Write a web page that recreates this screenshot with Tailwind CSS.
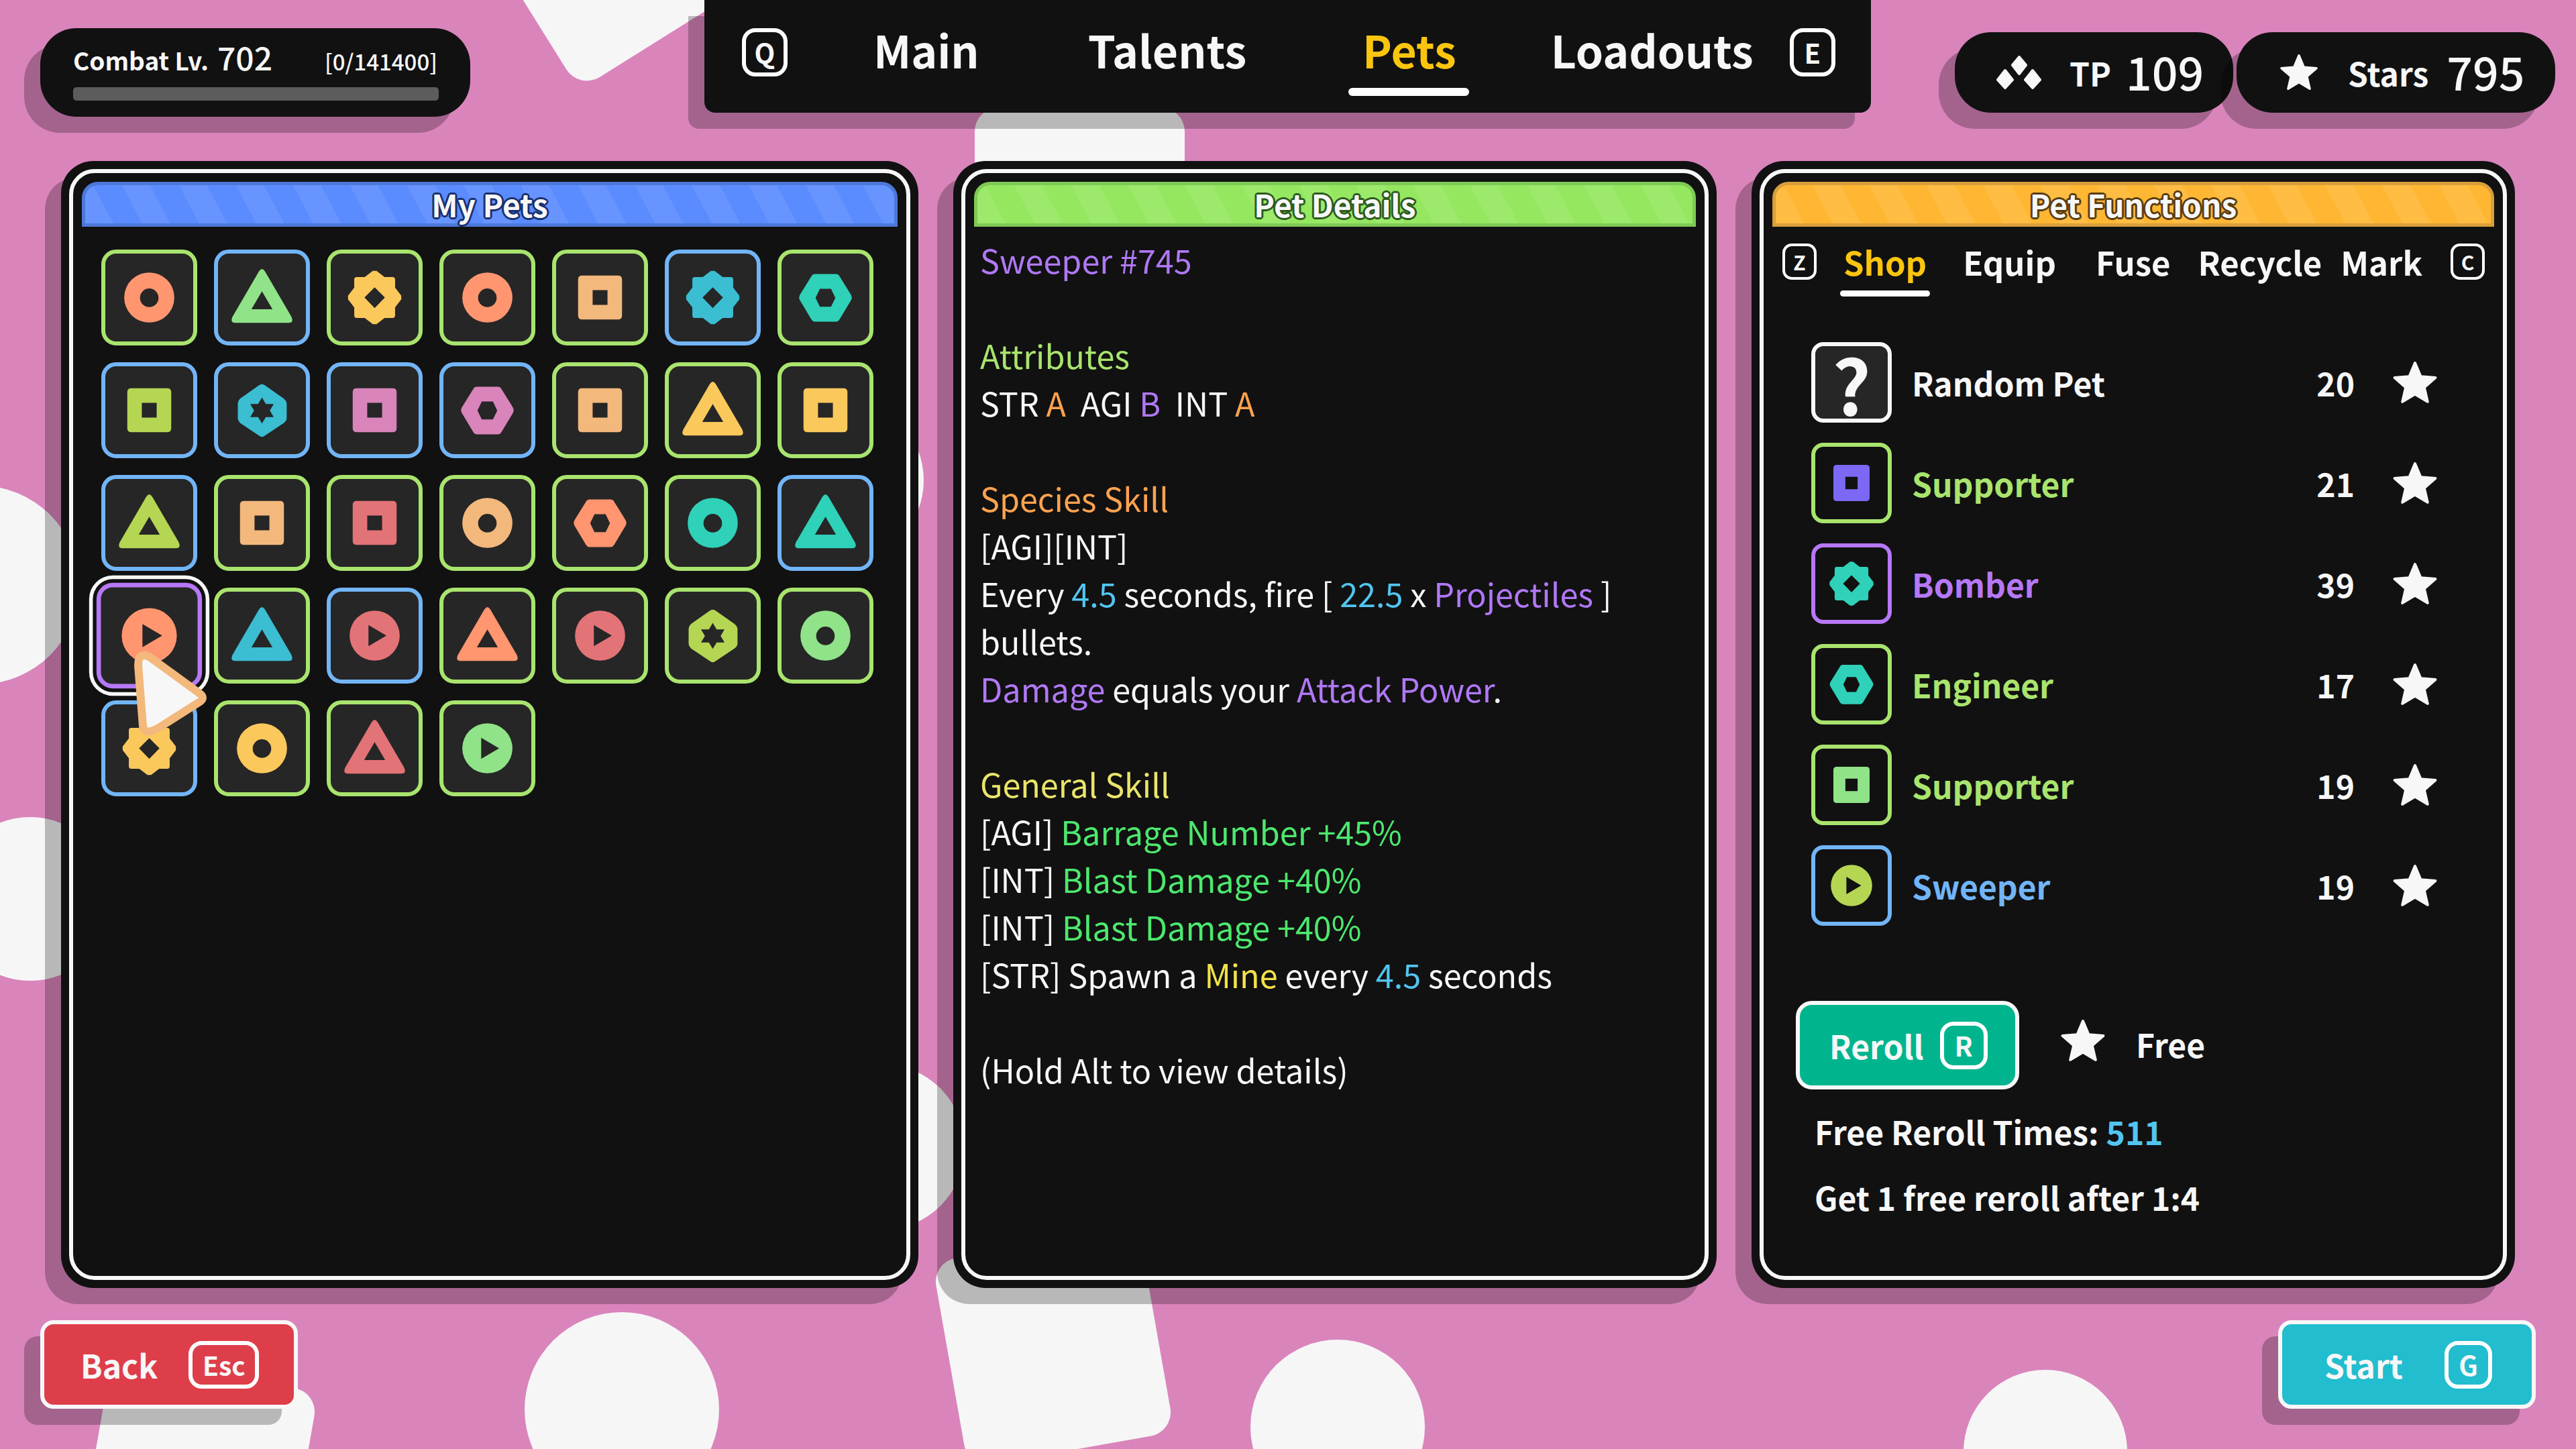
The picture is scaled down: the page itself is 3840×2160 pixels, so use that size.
<!doctype html>
<html lang="en">
<head>
<meta charset="utf-8">
<title>Pets</title>
<script src="https://cdn.jsdelivr.net/npm/@tailwindcss/browser@4"></script>
</head>
<body>
<svg class="absolute w-0 h-0" aria-hidden="true">
  <defs>
    <symbol id="ring" viewBox="0 0 142 142"><path fill="currentColor" fill-rule="evenodd" d="M71 30.500a40.500 40.500 0 1 0 0 81a40.500 40.500 0 1 0 0-81ZM71 56.500a15 15 0 1 1 0 30a15 15 0 1 1 0-30Z"/></symbol>
    <symbol id="play" viewBox="0 0 142 142"><path fill="currentColor" fill-rule="evenodd" d="M71 30.500a40.500 40.500 0 1 0 0 81a40.500 40.500 0 1 0 0-81ZM61 54L90 71L61 88Z"/></symbol>
    <symbol id="sq" viewBox="0 0 142 142"><path fill="currentColor" fill-rule="evenodd" d="M42 35.500H100Q106.500 35.500 106.500 42V100Q106.500 106.500 100 106.500H42Q35.500 106.500 35.500 100V42Q35.500 35.500 42 35.500ZM59 59V83H83V59Z"/></symbol>
    <symbol id="tri" viewBox="0 0 142 142"><path fill="currentColor" fill-rule="evenodd" d="M66 29Q71 21 76 29L118.500 102Q123 112 114 112H28Q19 112 23.500 102ZM71 61L54 90H88Z"/></symbol>
    <symbol id="hex" viewBox="0 0 142 142"><path fill="currentColor" fill-rule="evenodd" d="M54 33H88Q92 33 94 37L112 66Q115 71 112 76L94 106Q92 110 88 110H54Q50 110 48 106L30 76Q27 71 30 66L48 37Q50 33 54 33ZM62 57L55 71.500L62 86H80L87 71.500L80 57Z"/></symbol>
    <symbol id="star6" viewBox="0 0 142 142"><path fill="currentColor" fill-rule="evenodd" d="M66 31Q71 27 76 31L106 52Q111 56 111 61V84Q111 88 106 92L76 112Q71 116 66 112L36 92Q32 88 32 84V61Q32 56 36 52ZM71 50.500L64.700 61H52L58.300 71.500L52 82H64.700L71 92.500L77.300 82H90L83.700 71.500L90 61H77.300Z"/></symbol>
    <symbol id="gear" viewBox="0 0 142 142"><path fill="currentColor" fill-rule="evenodd" d="M68 28H74L87 38H100Q104 38 104 42V55L114 68V74L104 87V100Q104 104 100 104H87L74 114H68L55 104H42Q38 104 38 100V87L28 74V68L38 55V42Q38 38 42 38H55ZM71 54.500L54.500 71L71 88L87.500 71Z"/></symbol>
    <symbol id="bigstar" viewBox="0 0 70 67"><polygon fill="currentColor" stroke="currentColor" stroke-width="4" stroke-linejoin="round" points="35,4 43.500,24.300 65.400,26.100 48.800,40.500 53.800,61.900 35,50.500 16.200,61.900 21.200,40.500 4.600,26.100 26.500,24.300"/></symbol>
  </defs>
</svg>

<div class="relative w-[3840px] h-[2160px] overflow-hidden bg-[#da84bc] font-['Noto_Sans_CJK_SC','Noto_Sans',sans-serif] text-[#f7f7f7]">

  <div class="absolute left-[757px] top-[-237px] w-[312px] h-[312px] rounded-[36px] bg-[#f6f6f6] -rotate-[32deg]"></div>
  <div class="absolute left-[1453px] top-[160px] w-[313px] h-[312px] rounded-[36px] bg-[#f6f6f6]"></div>
  <div class="absolute left-[1414px] top-[1852px] w-[312px] h-[312px] rounded-[36px] bg-[#f6f6f6] -rotate-[10deg]"></div>
  <div class="absolute left-[138px] top-[2046px] w-[312px] h-[312px] rounded-[36px] bg-[#f6f6f6] rotate-[10deg]"></div>
  <div class="absolute left-[-178px] top-[724px] w-[296px] h-[296px] rounded-full bg-[#f6f6f6]"></div>
  <div class="absolute left-[-77px] top-[1218px] w-[244px] h-[244px] rounded-full bg-[#f6f6f6]"></div>
  <div class="absolute left-[1133px] top-[594px] w-[244px] h-[244px] rounded-full bg-[#f6f6f6]"></div>
  <div class="absolute left-[1190px] top-[1586px] w-[248px] h-[248px] rounded-full bg-[#f6f6f6]"></div>
  <div class="absolute left-[782px] top-[1956px] w-[290px] h-[290px] rounded-full bg-[#f6f6f6]"></div>
  <div class="absolute left-[1864px] top-[1997px] w-[260px] h-[260px] rounded-full bg-[#f6f6f6]"></div>
  <div class="absolute left-[2927px] top-[2042px] w-[244px] h-[244px] rounded-full bg-[#f6f6f6]"></div>

  <!-- top bar -->
  <header class="relative flex items-start h-[240px]">
    <div class="mt-[42px] ml-[60px] w-[641px] h-[132px] rounded-[54px] bg-[#111] shadow-[-24px_24px_0_rgba(0,0,0,0.25)] px-[49px] pt-[6px]">
      <div class="flex items-baseline font-semibold h-[66px]">
        <span class="text-[37px]">Combat Lv.</span>
        <span class="ml-[13px] text-[48px] font-medium">702</span>
        <span class="ml-auto text-[33px] font-medium">[0/141400]</span>
      </div>
      <div class="mt-[16px] h-[20px] w-[545px] rounded-[5px] bg-[#5c5c5c]"></div>
    </div>

    <nav class="relative ml-[349px] w-[1739px] h-[168px] rounded-b-[16px] bg-[#111] shadow-[-24px_24px_0_rgba(0,0,0,0.25)] font-bold">
      <div class="flex items-center h-[156px] pl-[56px]">
        <span class="w-[68px] h-[72px] rounded-[20px] border-[6px] border-white flex items-center justify-center text-[40px] font-bold">Q</span>
        <span class="ml-[128px] mb-[10px] text-[66px]">Main</span>
        <span class="ml-[162px] mb-[10px] text-[66px]">Talents</span>
        <span class="ml-[173px] mb-[10px] text-[66px] text-[#fac50f]">Pets</span>
        <span class="ml-[141px] mb-[10px] text-[66px]">Loadouts</span>
        <span class="ml-[54px] w-[68px] h-[72px] rounded-[20px] border-[6px] border-white flex items-center justify-center text-[40px] font-bold">E</span>
      </div>
      <div class="absolute left-[960px] top-[131px] w-[180px] h-[12px] rounded-full bg-white"></div>
    </nav>

    <div class="ml-[125px] mt-[48px] w-[415px] h-[120px] rounded-[54px] bg-[#111] shadow-[-24px_24px_0_rgba(0,0,0,0.25)] flex items-center pl-[61px] font-semibold">
      <svg class="w-[70px] h-[50px]" viewBox="0 0 70 50"><g fill="#f7f7f7" stroke="#f7f7f7" stroke-width="4" stroke-linejoin="round"><polygon points="35,2 45,14 35,27 25,14"/><polygon points="14,22 25,36 14,48 3,36"/><polygon points="55,22 66,36 55,48 44,36"/></g></svg>
      <span class="ml-[40px] text-[48px]">TP</span>
      <span class="ml-[22px] mb-[4px] text-[68px] font-medium">109</span>
    </div>
    <div class="ml-[5px] mt-[48px] w-[475px] h-[120px] rounded-[54px] bg-[#111] shadow-[-24px_24px_0_rgba(0,0,0,0.25)] flex items-center pl-[63px] font-semibold">
      <svg class="w-[60px] h-[58px]"><use href="#bigstar"/></svg>
      <span class="ml-[43px] text-[48px]">Stars</span>
      <span class="ml-[27px] mb-[4px] text-[68px] font-medium">795</span>
    </div>
  </header>

  <!-- panels -->
  <main class="relative flex gap-[52px] pl-[91px] h-[1680px]">

    <section class="w-[1278px] rounded-[48px] bg-[#111] p-[12px] shadow-[-24px_24px_0_rgba(0,0,0,0.25)]">
      <div class="h-full rounded-[38px] border-[6px] border-[#f7f7f7] px-[13px] pt-[13px]">
        <div class="h-[67px] rounded-t-[24px] border-[5px] border-[#4d78d8] bg-[#5a8bff] bg-[repeating-linear-gradient(62deg,rgba(255,255,255,0.08)_0,rgba(255,255,255,0.08)_37px,transparent_37px,transparent_75px)] flex items-center justify-center text-[46px] font-bold [text-shadow:3px_0_0_#18306e,-3px_0_0_#18306e,0_3px_0_#18306e,0_-3px_0_#18306e,2px_2px_0_#18306e,-2px_2px_0_#18306e,2px_-2px_0_#18306e,-2px_-2px_0_#18306e]">My Pets</div>
        <div class="grid grid-cols-[repeat(7,143px)] auto-rows-[143px] gap-[25px] ml-[29px] mt-[34px]">
          <div class="rounded-[22px] border-[6px] border-[#a9e46e] bg-[#262626]"><svg class="w-full h-full text-[#ff9670]"><use href="#ring"/></svg></div>
          <div class="rounded-[22px] border-[6px] border-[#72b5f7] bg-[#262626]"><svg class="w-full h-full text-[#90e388]"><use href="#tri"/></svg></div>
          <div class="rounded-[22px] border-[6px] border-[#a9e46e] bg-[#262626]"><svg class="w-full h-full text-[#fbc85c]"><use href="#gear"/></svg></div>
          <div class="rounded-[22px] border-[6px] border-[#a9e46e] bg-[#262626]"><svg class="w-full h-full text-[#ff9670]"><use href="#ring"/></svg></div>
          <div class="rounded-[22px] border-[6px] border-[#a9e46e] bg-[#262626]"><svg class="w-full h-full text-[#f3b87c]"><use href="#sq"/></svg></div>
          <div class="rounded-[22px] border-[6px] border-[#72b5f7] bg-[#262626]"><svg class="w-full h-full text-[#3bbdd2]"><use href="#gear"/></svg></div>
          <div class="rounded-[22px] border-[6px] border-[#a9e46e] bg-[#262626]"><svg class="w-full h-full text-[#2fd1b8]"><use href="#hex"/></svg></div>

          <div class="rounded-[22px] border-[6px] border-[#72b5f7] bg-[#262626]"><svg class="w-full h-full text-[#b5d653]"><use href="#sq"/></svg></div>
          <div class="rounded-[22px] border-[6px] border-[#72b5f7] bg-[#262626]"><svg class="w-full h-full text-[#3bbdd2]"><use href="#star6"/></svg></div>
          <div class="rounded-[22px] border-[6px] border-[#72b5f7] bg-[#262626]"><svg class="w-full h-full text-[#d984bb]"><use href="#sq"/></svg></div>
          <div class="rounded-[22px] border-[6px] border-[#72b5f7] bg-[#262626]"><svg class="w-full h-full text-[#d984bb]"><use href="#hex"/></svg></div>
          <div class="rounded-[22px] border-[6px] border-[#a9e46e] bg-[#262626]"><svg class="w-full h-full text-[#f3b87c]"><use href="#sq"/></svg></div>
          <div class="rounded-[22px] border-[6px] border-[#a9e46e] bg-[#262626]"><svg class="w-full h-full text-[#fbc85c]"><use href="#tri"/></svg></div>
          <div class="rounded-[22px] border-[6px] border-[#a9e46e] bg-[#262626]"><svg class="w-full h-full text-[#fbc85c]"><use href="#sq"/></svg></div>

          <div class="rounded-[22px] border-[6px] border-[#72b5f7] bg-[#262626]"><svg class="w-full h-full text-[#b5d653]"><use href="#tri"/></svg></div>
          <div class="rounded-[22px] border-[6px] border-[#a9e46e] bg-[#262626]"><svg class="w-full h-full text-[#f3b87c]"><use href="#sq"/></svg></div>
          <div class="rounded-[22px] border-[6px] border-[#a9e46e] bg-[#262626]"><svg class="w-full h-full text-[#e27377]"><use href="#sq"/></svg></div>
          <div class="rounded-[22px] border-[6px] border-[#a9e46e] bg-[#262626]"><svg class="w-full h-full text-[#f3b87c]"><use href="#ring"/></svg></div>
          <div class="rounded-[22px] border-[6px] border-[#a9e46e] bg-[#262626]"><svg class="w-full h-full text-[#ff9670]"><use href="#hex"/></svg></div>
          <div class="rounded-[22px] border-[6px] border-[#a9e46e] bg-[#262626]"><svg class="w-full h-full text-[#2fd1b8]"><use href="#ring"/></svg></div>
          <div class="rounded-[22px] border-[6px] border-[#72b5f7] bg-[#262626]"><svg class="w-full h-full text-[#2fd1b8]"><use href="#tri"/></svg></div>

          <div class="relative z-10 scale-[1.1] rounded-[22px] border-[6px] border-[#b678f6] bg-[#262626] shadow-[0_0_0_5px_#111,0_0_0_10px_#f7f7f7]"><svg class="w-full h-full text-[#ff9670]"><use href="#play"/></svg></div>
          <div class="rounded-[22px] border-[6px] border-[#a9e46e] bg-[#262626]"><svg class="w-full h-full text-[#3bbdd2]"><use href="#tri"/></svg></div>
          <div class="rounded-[22px] border-[6px] border-[#72b5f7] bg-[#262626]"><svg class="w-full h-full text-[#e27377]"><use href="#play"/></svg></div>
          <div class="rounded-[22px] border-[6px] border-[#a9e46e] bg-[#262626]"><svg class="w-full h-full text-[#ff9670]"><use href="#tri"/></svg></div>
          <div class="rounded-[22px] border-[6px] border-[#a9e46e] bg-[#262626]"><svg class="w-full h-full text-[#e27377]"><use href="#play"/></svg></div>
          <div class="rounded-[22px] border-[6px] border-[#a9e46e] bg-[#262626]"><svg class="w-full h-full text-[#b5d653]"><use href="#star6"/></svg></div>
          <div class="rounded-[22px] border-[6px] border-[#a9e46e] bg-[#262626]"><svg class="w-full h-full text-[#90e388]"><use href="#ring"/></svg></div>

          <div class="rounded-[22px] border-[6px] border-[#72b5f7] bg-[#262626]"><svg class="w-full h-full text-[#fbc85c]"><use href="#gear"/></svg></div>
          <div class="rounded-[22px] border-[6px] border-[#a9e46e] bg-[#262626]"><svg class="w-full h-full text-[#fbc85c]"><use href="#ring"/></svg></div>
          <div class="rounded-[22px] border-[6px] border-[#a9e46e] bg-[#262626]"><svg class="w-full h-full text-[#e27377]"><use href="#tri"/></svg></div>
          <div class="rounded-[22px] border-[6px] border-[#a9e46e] bg-[#262626]"><svg class="w-full h-full text-[#90e388]"><use href="#play"/></svg></div>
        </div>
      </div>
    </section>

    <section class="w-[1138px] rounded-[48px] bg-[#111] p-[12px] shadow-[-24px_24px_0_rgba(0,0,0,0.25)]">
      <div class="h-full rounded-[38px] border-[6px] border-[#f7f7f7] px-[13px] pt-[13px]">
        <div class="h-[67px] rounded-t-[24px] border-[5px] border-[#7fc955] bg-[#94e75f] bg-[repeating-linear-gradient(62deg,rgba(255,255,255,0.08)_0,rgba(255,255,255,0.08)_37px,transparent_37px,transparent_75px)] flex items-center justify-center text-[46px] font-bold [text-shadow:3px_0_0_#2c5a1e,-3px_0_0_#2c5a1e,0_3px_0_#2c5a1e,0_-3px_0_#2c5a1e,2px_2px_0_#2c5a1e,-2px_2px_0_#2c5a1e,2px_-2px_0_#2c5a1e,-2px_-2px_0_#2c5a1e]">Pet Details</div>
        <div class="ml-[9px] mt-[14px] text-[48.500px] leading-[71px]">
          <p class="text-[#b078f5]">Sweeper #745</p>
          <p class="mt-[71px] text-[#a9e46e]">Attributes</p>
          <p>STR <span class="text-[#ffa24f]">A</span>&nbsp; AGI <span class="text-[#b078f5]">B</span>&nbsp; INT <span class="text-[#ffa24f]">A</span></p>
          <p class="mt-[71px] text-[#ffa24f]">Species Skill</p>
          <p>[AGI][INT]</p>
          <p>Every <span class="text-[#52c5f0]">4.5</span> seconds, fire [ <span class="text-[#52c5f0]">22.5</span> x <span class="text-[#b078f5]">Projectiles</span> ]</p>
          <p>bullets.</p>
          <p><span class="text-[#b078f5]">Damage</span> equals your <span class="text-[#b078f5]">Attack Power</span>.</p>
          <p class="mt-[71px] text-[#eae56a]">General Skill</p>
          <p>[AGI] <span class="text-[#4de86e]">Barrage Number +45%</span></p>
          <p>[INT] <span class="text-[#4de86e]">Blast Damage +40%</span></p>
          <p>[INT] <span class="text-[#4de86e]">Blast Damage +40%</span></p>
          <p>[STR] Spawn a <span class="text-[#f2e24a]">Mine</span> every <span class="text-[#52c5f0]">4.5</span> seconds</p>
          <p class="mt-[71px]">(Hold Alt to view details)</p>
        </div>
      </div>
    </section>

    <section class="w-[1138px] rounded-[48px] bg-[#111] p-[12px] shadow-[-24px_24px_0_rgba(0,0,0,0.25)]">
      <div class="h-full rounded-[38px] border-[6px] border-[#f7f7f7] px-[13px] pt-[13px]">
        <div class="h-[67px] rounded-t-[24px] border-[5px] border-[#d99f3a] bg-[#ffb733] bg-[repeating-linear-gradient(62deg,rgba(255,255,255,0.08)_0,rgba(255,255,255,0.08)_37px,transparent_37px,transparent_75px)] flex items-center justify-center text-[46px] font-bold [text-shadow:3px_0_0_#5a3c10,-3px_0_0_#5a3c10,0_3px_0_#5a3c10,0_-3px_0_#5a3c10,2px_2px_0_#5a3c10,-2px_2px_0_#5a3c10,2px_-2px_0_#5a3c10,-2px_-2px_0_#5a3c10]">Pet Functions</div>

        <div class="relative flex items-center h-[54px] mt-[25px] ml-[15px] text-[49px] font-bold">
          <span class="w-[51px] h-[54px] rounded-[14px] border-[4px] border-white flex items-center justify-center text-[30px] font-bold">Z</span>
          <span class="ml-[40px] text-[#fac50f]">Shop</span>
          <span class="ml-[54px]">Equip</span>
          <span class="ml-[59px]">Fuse</span>
          <span class="ml-[41px]">Recycle</span>
          <span class="ml-[28px]">Mark</span>
          <span class="ml-[42px] w-[51px] h-[54px] rounded-[14px] border-[4px] border-white flex items-center justify-center text-[30px] font-bold">C</span>
          <div class="absolute left-[86px] top-[70px] w-[134px] h-[9px] rounded-full bg-white"></div>
        </div>

        <ul class="mt-[93px] ml-[58px] flex flex-col gap-[30px] text-[48px] font-semibold">
          <li class="flex items-center h-[120px]">
            <div class="w-[120px] h-[120px] rounded-[18px] border-[6px] border-[#f7f7f7] bg-[#262626] flex items-center justify-center text-[112px] font-bold leading-none">?</div>
            <span class="ml-[30px] text-[#f7f7f7]">Random Pet</span>
            <span class="ml-auto w-[80px] text-right">20</span>
            <svg class="ml-[55px] mr-[83px] w-[70px] h-[67px] text-[#f7f7f7]"><use href="#bigstar"/></svg>
          </li>
          <li class="flex items-center h-[120px]">
            <div class="w-[120px] h-[120px] rounded-[18px] border-[6px] border-[#a9e46e]"><svg class="w-full h-full text-[#7b68f5]"><use href="#sq"/></svg></div>
            <span class="ml-[30px] text-[#a9e46e]">Supporter</span>
            <span class="ml-auto w-[80px] text-right">21</span>
            <svg class="ml-[55px] mr-[83px] w-[70px] h-[67px] text-[#f7f7f7]"><use href="#bigstar"/></svg>
          </li>
          <li class="flex items-center h-[120px]">
            <div class="w-[120px] h-[120px] rounded-[18px] border-[6px] border-[#b678f6]"><svg class="w-full h-full text-[#2fd1b8]"><use href="#gear"/></svg></div>
            <span class="ml-[30px] text-[#b678f6]">Bomber</span>
            <span class="ml-auto w-[80px] text-right">39</span>
            <svg class="ml-[55px] mr-[83px] w-[70px] h-[67px] text-[#f7f7f7]"><use href="#bigstar"/></svg>
          </li>
          <li class="flex items-center h-[120px]">
            <div class="w-[120px] h-[120px] rounded-[18px] border-[6px] border-[#a9e46e]"><svg class="w-full h-full text-[#2fd1b8]"><use href="#hex"/></svg></div>
            <span class="ml-[30px] text-[#a9e46e]">Engineer</span>
            <span class="ml-auto w-[80px] text-right">17</span>
            <svg class="ml-[55px] mr-[83px] w-[70px] h-[67px] text-[#f7f7f7]"><use href="#bigstar"/></svg>
          </li>
          <li class="flex items-center h-[120px]">
            <div class="w-[120px] h-[120px] rounded-[18px] border-[6px] border-[#a9e46e]"><svg class="w-full h-full text-[#90e388]"><use href="#sq"/></svg></div>
            <span class="ml-[30px] text-[#a9e46e]">Supporter</span>
            <span class="ml-auto w-[80px] text-right">19</span>
            <svg class="ml-[55px] mr-[83px] w-[70px] h-[67px] text-[#f7f7f7]"><use href="#bigstar"/></svg>
          </li>
          <li class="flex items-center h-[120px]">
            <div class="w-[120px] h-[120px] rounded-[18px] border-[6px] border-[#72b5f7]"><svg class="w-full h-full text-[#b5d653]"><use href="#play"/></svg></div>
            <span class="ml-[30px] text-[#72b5f7]">Sweeper</span>
            <span class="ml-auto w-[80px] text-right">19</span>
            <svg class="ml-[55px] mr-[83px] w-[70px] h-[67px] text-[#f7f7f7]"><use href="#bigstar"/></svg>
          </li>
        </ul>

        <div class="flex items-center mt-[112px] ml-[35px] text-[48px] font-semibold">
          <div class="w-[333px] h-[132px] rounded-[24px] border-[6px] border-[#f7f7f7] bg-[#00b58e] flex items-center pl-[44px]">
            <span>Reroll</span>
            <span class="ml-[24px] w-[71px] h-[71px] rounded-[20px] border-[6px] border-white flex items-center justify-center text-[40px] font-bold">R</span>
          </div>
          <svg class="ml-[60px] mb-[14px] w-[70px] h-[67px] text-[#f7f7f7]"><use href="#bigstar"/></svg>
          <span class="ml-[44px] mb-[5px]">Free</span>
        </div>
        <p class="mt-[27px] ml-[63px] text-[48px] font-semibold leading-[70px]">Free Reroll Times: <span class="text-[#52c5f0]">511</span></p>
        <p class="mt-[28px] ml-[63px] text-[48px] font-semibold leading-[70px]">Get 1 free reroll after 1:4</p>
      </div>
    </section>
  </main>

  <!-- footer buttons -->
  <footer class="relative flex justify-between px-[60px] mt-[48px] text-[48px] font-semibold">
    <div class="w-[384px] h-[132px] rounded-[20px] border-[6px] border-[#f7f7f7] bg-[#de3e4a] shadow-[-24px_24px_0_rgba(0,0,0,0.25)] flex items-center pl-[54px]">
      <span>Back</span>
      <span class="ml-[46px] w-[105px] h-[71px] rounded-[20px] border-[6px] border-white flex items-center justify-center text-[39px] font-bold">Esc</span>
    </div>
    <div class="w-[384px] h-[132px] rounded-[20px] border-[6px] border-[#f7f7f7] bg-[#22bdce] shadow-[-24px_24px_0_rgba(0,0,0,0.25)] flex items-center pl-[63px]">
      <span>Start</span>
      <span class="ml-[62px] w-[71px] h-[71px] rounded-[20px] border-[6px] border-white flex items-center justify-center text-[40px] font-bold">G</span>
    </div>
  </footer>

  <!-- pointer over the selected pet -->
  <svg class="absolute left-[190px] top-[960px] w-[130px] h-[150px] z-20" viewBox="190 960 130 150">
    <path fill="#f7f7f7" stroke="#f3b87c" stroke-width="12" stroke-linejoin="round" d="M206 992Q206 970 224 980L298 1034Q306 1040 298 1046L238 1084Q215 1098 213 1082Z"/>
  </svg>
</div>
</body>
</html>
